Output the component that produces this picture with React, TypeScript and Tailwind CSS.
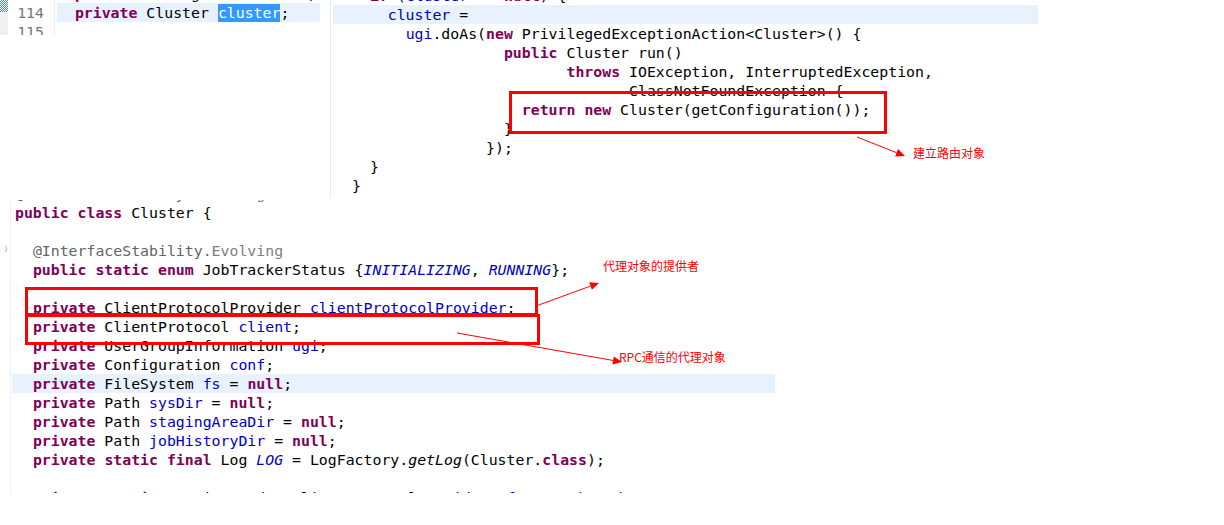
import React from "react";

type Tok = [string, string?];

const K = "font-bold text-[#7f0055]";
const F = "text-[#0000c0]";
const FI = "italic text-[#0000c0]";
const MI = "italic text-black";
const A = "text-[#646464]";
const A2 = "text-[#7f7f7f]";
const SEL = "bg-[#3399ff] text-white";

const sp = (n: number): Tok => [" ".repeat(n)];

function Line({ toks, hl, pad }: { toks: Tok[]; hl?: boolean; pad?: string }) {
  return (
    <div
      className={
        "h-[19px] pt-[1px] leading-[19px] whitespace-pre " +
        (hl ? "bg-[#e8f2fe] " : "") +
        (pad ?? "")
      }
    >
      {toks.length === 0 ? " " : toks.map(([t, c], i) => (
        <span key={i} className={c ?? "text-black"}>
          {t}
        </span>
      ))}
    </div>
  );
}

const topLeftLines: { toks: Tok[]; hl?: boolean }[] = [
  { toks: [sp(2), ["private", K], [" Configuration "], ["conf", F], [";"]] },
  { toks: [sp(2), ["private", K], [" Cluster "], ["cluster", SEL], [";"]], hl: true },
  { toks: [] },
];

const topRightLines: { toks: Tok[]; hl?: boolean }[] = [
  { toks: [sp(2), ["if", K], [" ("], ["cluster", F], [" == "], ["null", K], [") {"]] },
  { toks: [sp(4), ["cluster", F], [" ="]], hl: true },
  { toks: [sp(6), ["ugi", F], [".doAs("], ["new", K], [" PrivilegedExceptionAction<Cluster>() {"]] },
  { toks: [sp(17), ["public", K], [" Cluster run()"]] },
  { toks: [sp(24), ["throws", K], [" IOException, InterruptedException,"]] },
  { toks: [sp(31), ["ClassNotFoundException {"]] },
  { toks: [sp(19), ["return", K], [" "], ["new", K], [" Cluster(getConfiguration());"]] },
  { toks: [sp(17), ["}"]] },
  { toks: [sp(15), ["});"]] },
  { toks: [sp(2), ["}"]] },
  { toks: [["}"]] },
];

const priv: Tok = ["private", K];

const bottomLines: { toks: Tok[]; hl?: boolean }[] = [
  { toks: [["@InterfaceStability.", A], ["Evolving", A2]] },
  { toks: [["public", K], [" "], ["class", K], [" Cluster {"]] },
  { toks: [] },
  { toks: [sp(2), ["@InterfaceStability.", A], ["Evolving", A2]] },
  {
    toks: [
      sp(2), ["public", K], [" "], ["static", K], [" "], ["enum", K],
      [" JobTrackerStatus {"], ["INITIALIZING", FI], [", "], ["RUNNING", FI], ["};"],
    ],
  },
  { toks: [] },
  { toks: [sp(2), priv, [" ClientProtocolProvider "], ["clientProtocolProvider", F], [";"]] },
  { toks: [sp(2), priv, [" ClientProtocol "], ["client", F], [";"]] },
  { toks: [sp(2), priv, [" UserGroupInformation "], ["ugi", F], [";"]] },
  { toks: [sp(2), priv, [" Configuration "], ["conf", F], [";"]] },
  { toks: [sp(2), priv, [" FileSystem "], ["fs", F], [" = "], ["null", K], [";"]], hl: true },
  { toks: [sp(2), priv, [" Path "], ["sysDir", F], [" = "], ["null", K], [";"]] },
  { toks: [sp(2), priv, [" Path "], ["stagingAreaDir", F], [" = "], ["null", K], [";"]] },
  { toks: [sp(2), priv, [" Path "], ["jobHistoryDir", F], [" = "], ["null", K], [";"]] },
  {
    toks: [
      sp(2), priv, [" "], ["static", K], [" "], ["final", K], [" Log "], ["LOG", FI],
      [" = LogFactory."], ["getLog", MI], ["(Cluster."], ["class", K], [");"],
    ],
  },
  { toks: [] },
  { toks: [sp(2), priv, [" "], ["static", K], [" ServiceLoader<ClientProtocolProvider> "], ["frameworkLoader", F], [" ="]] },
];

function Arrow({ x1, y1, x2, y2 }: { x1: number; y1: number; x2: number; y2: number }) {
  const dx = x2 - x1;
  const dy = y2 - y1;
  const len = Math.hypot(dx, dy);
  const ux = dx / len;
  const uy = dy / len;
  const nx = -uy;
  const ny = ux;
  const hl = 9;
  const hw = 4;
  const bx = x2 - ux * hl;
  const by = y2 - uy * hl;
  const pts = `${x2},${y2} ${bx + nx * hw},${by + ny * hw} ${bx - nx * hw},${by - ny * hw}`;
  return (
    <g>
      <line x1={x1} y1={y1} x2={bx} y2={by} stroke="#ff0000" strokeWidth={1} />
      <polygon points={pts} fill="#ff0000" />
    </g>
  );
}

export default function App() {
  return (
    <div className="relative w-[1224px] h-[525px] overflow-hidden bg-white font-['DejaVu_Sans_Mono','Liberation_Mono',monospace] text-[14.85px]">
      {/* top row */}
      <div className="flex h-[200px]">
        {/* top-left editor fragment */}
        <div className="flex w-[330px] h-[35px] overflow-hidden">
          <div className="flex flex-col w-[8px]">
            <div className="h-[12px] bg-[repeating-conic-gradient(#4a86d8_0_25%,#ffffff_0_50%)] bg-[length:2px_2px]" />
            <div className="flex-1 bg-[#f0f0f0]" />
          </div>
          <div className="w-[47px] border-r border-[#ececec] pr-[10px] text-right text-[#787878] -mt-[16px]">
            <div className="h-[19px] pt-[1px] leading-[19px]">113</div>
            <div className="h-[19px] pt-[1px] leading-[19px]">114</div>
            <div className="h-[19px] pt-[1px] leading-[19px]">115</div>
          </div>
          <div className="ml-[2px] w-[263px] -mt-[16px]">
            {topLeftLines.map((l, i) => (
              <Line key={i} toks={l.toks} hl={l.hl} />
            ))}
          </div>
        </div>

        {/* top-right editor fragment */}
        <div className="w-[708px] h-[198px] overflow-hidden border-l border-[#ebebeb] pl-[2px]">
          <div className="-mt-[14px]">
            {topRightLines.map((l, i) => (
              <Line key={i} toks={l.toks} hl={l.hl} pad="pl-[19px]" />
            ))}
          </div>
        </div>
      </div>

      {/* bottom editor fragment */}
      <div className="flex w-[775px] h-[293px] overflow-hidden">
        <div className="w-[11px] border-r border-[#efefef] flex flex-col items-end pr-[1px]">
          <svg width="5" height="8" viewBox="0 0 5 8" className="mt-[45px]">
            <path d="M1 1 Q4.5 4 1 7" stroke="#b8c4d4" strokeWidth="1.2" fill="none" />
          </svg>
        </div>
        <div className="flex-1 pl-[1px]">
          <div className="-mt-[16px]">
            {bottomLines.map((l, i) => (
              <Line key={i} toks={l.toks} hl={l.hl} pad="pl-[3px]" />
            ))}
          </div>
        </div>
      </div>

      {/* annotations */}
      <svg
        className="absolute left-0 top-0 pointer-events-none"
        width="1224"
        height="525"
        viewBox="0 0 1224 525"
      >
        <rect x="510.5" y="92.5" width="375" height="40" fill="none" stroke="#ff0000" strokeWidth="3" />
        <rect x="26.5" y="288.5" width="510" height="26" fill="none" stroke="#ff0000" strokeWidth="3" />
        <rect x="26.5" y="315.5" width="512" height="28" fill="none" stroke="#ff0000" strokeWidth="3" />
        <Arrow x1={857} y1={137} x2={905} y2={156} />
        <Arrow x1={536} y1={306} x2={599} y2={283} />
        <Arrow x1={457} y1={333} x2={622} y2={362} />
      </svg>

      <div className="absolute left-[913px] top-[147px] text-[12px] leading-[12px] text-[#ff0000] whitespace-nowrap font-['Noto_Sans_CJK_SC','Noto_Sans',sans-serif]">
        建立路由对象
      </div>
      <div className="absolute left-[603px] top-[260px] text-[12px] leading-[12px] text-[#ff0000] whitespace-nowrap font-['Noto_Sans_CJK_SC','Noto_Sans',sans-serif]">
        代理对象的提供者
      </div>
      <div className="absolute left-[619px] top-[351px] text-[12px] leading-[12px] text-[#ff0000] whitespace-nowrap font-['Noto_Sans_CJK_SC','Noto_Sans',sans-serif]">
        RPC通信的代理对象
      </div>
    </div>
  );
}
